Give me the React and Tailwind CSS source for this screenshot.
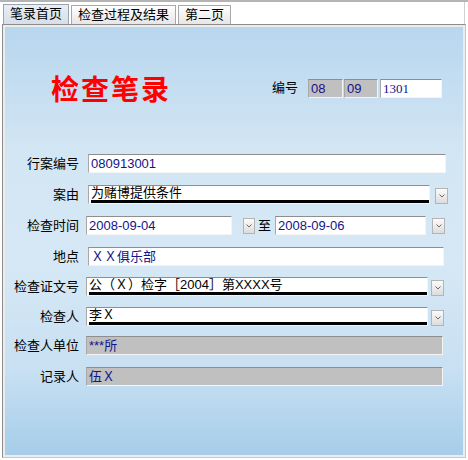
import React from 'react';

const FONT = { fontFamily: '"Liberation Sans", "Noto Sans CJK SC", sans-serif' };

// sunken white edit box
const Field = ({ value, width, blue = true, gray = false, serif = false }) => (
  <div
    className={`h-[19px] shrink-0 border border-t-[#8e8e8e] border-l-[#a8a8a8] border-r-[#f4f4f4] border-b-[#f4f4f4] px-[2px] text-[13px] leading-[17px] whitespace-nowrap ${gray ? 'bg-[#c0c0c0]' : 'bg-white'} ${blue ? 'text-[#13138a]' : 'text-black'}`}
    style={{ width, ...(serif ? { fontFamily: '"Liberation Serif", "Noto Sans CJK SC", serif' } : {}) }}
  >
    {value}
  </div>
);

const DropButton = ({ width = 12 }) => (
  <div
    className="h-[16px] shrink-0 border border-[#b4b4b4] bg-[linear-gradient(180deg,#fbfbfb,#dcdcdc)] flex items-center justify-center"
    style={{ width }}
  >
    <svg width="6" height="4" viewBox="0 0 6 4">
      <path d="M0.5 0.5 L3 3 L5.5 0.5" fill="none" stroke="#6a6a6a" strokeWidth="1" />
    </svg>
  </div>
);

// combo with the thick black underline
const Combo = ({ value, width, gap = 5 }) => (
  <div className="flex items-end">
    <div
      className="h-[19px] shrink-0 border border-t-[#8e8e8e] border-l-[#a8a8a8] border-r-[#f4f4f4] border-b-[#f4f4f4] bg-white flex flex-col"
      style={{ width }}
    >
      <div className="h-[14px] px-[2px] text-[13px] leading-[14px] whitespace-nowrap text-black">
        {value}
      </div>
      <div className="ml-[2px] h-[3px] bg-black" />
    </div>
    <div style={{ marginLeft: gap }}>
      <DropButton width={13} />
    </div>
  </div>
);

const Row = ({ label, mt, ml = 9, children }) => (
  <div className="flex items-center" style={{ marginTop: mt }}>
    <div className="w-[74px] shrink-0 text-right text-[13px] leading-[19px] text-black">{label}</div>
    <div className="flex items-center" style={{ marginLeft: ml }}>{children}</div>
  </div>
);

const Tab = ({ label, active }) => (
  <div
    className={`px-[6px] border border-b-0 text-[13px] leading-[18px] text-black ${
      active
        ? 'h-[20px] border-[#9aa4b0] bg-[linear-gradient(180deg,#e9eef3,#d6dee8)]'
        : 'h-[19px] border-[#a8a8a8] bg-[linear-gradient(180deg,#ffffff,#e6e6e6)]'
    }`}
  >
    {label}
  </div>
);

export default function App() {
  return (
    <div className="w-[468px] h-[460px] bg-white border-t-2 border-[#b4b4b4] flex flex-col overflow-hidden" style={FONT}>
      {/* tabs */}
      <div className="h-[22px] flex items-end gap-[2px] pl-[3px] pr-[4px] border-r border-[#d0d0d0] mr-[3px]">
        <Tab label="笔录首页" active />
        <Tab label="检查过程及结果" />
        <Tab label="第二页" />
      </div>

      {/* panel */}
      <div className="ml-[2px] mr-[2px] mb-[2px] flex-1 border border-[#8c8c8c] border-r-[#c8c8c8] border-b-[#c8c8c8] bg-[#ececec] p-[2px] flex">
        <div className="flex-1 bg-[linear-gradient(180deg,#b8d6ee_0%,#d3e6f4_30%,#d6e8f5_55%,#c8e0f2_80%,#a6cdea_100%)]">
          {/* title row */}
          <div className="flex items-center h-[36px] mt-[43px]">
            <div
              className="ml-[46px] text-[28px] leading-[36px] tracking-[2px] text-[#ff0000] font-bold"
              style={{ fontFamily: '"Noto Sans CJK SC", sans-serif' }}
            >
              检查笔录
            </div>
            <div className="ml-auto mr-[21px] flex items-center">
              <span className="text-[13px] text-black mr-[10px]">编号</span>
              <Field value="08" width={35} gray />
              <div className="ml-[1px]"><Field value="09" width={34} gray /></div>
              <div className="ml-[2px]"><Field value="1301" width={62} serif /></div>
            </div>
          </div>

          {/* form */}
          <Row label="行案编号" mt={48}>
            <Field value="080913001" width={358} />
          </Row>
          <Row label="案由" mt={12}>
            <Combo value="为赌博提供条件" width={342} gap={5} />
          </Row>
          <Row label="检查时间" mt={12} ml={7}>
            <Field value="2008-09-04" width={146} />
            <div className="ml-[11px]"><DropButton width={12} /></div>
            <span className="ml-[3px] text-[13px] text-black">至</span>
            <div className="ml-[4px]"><Field value="2008-09-06" width={151} /></div>
            <div className="ml-[6px]"><DropButton width={13} /></div>
          </Row>
          <Row label="地点" mt={11}>
            <Field value="ＸＸ俱乐部" width={356} />
          </Row>
          <Row label="检查证文号" mt={11} ml={7}>
            <Combo value="公（Ｘ）检字［2004］第XXXX号" width={342} gap={3} />
          </Row>
          <Row label="检查人" mt={11} ml={7}>
            <Combo value="李Ｘ" width={342} gap={3} />
          </Row>
          <Row label="检查人单位" mt={10} ml={7}>
            <Field value="***所" width={357} gray />
          </Row>
          <Row label="记录人" mt={12} ml={7}>
            <Field value="伍Ｘ" width={357} gray />
          </Row>
        </div>
      </div>
    </div>
  );
}
